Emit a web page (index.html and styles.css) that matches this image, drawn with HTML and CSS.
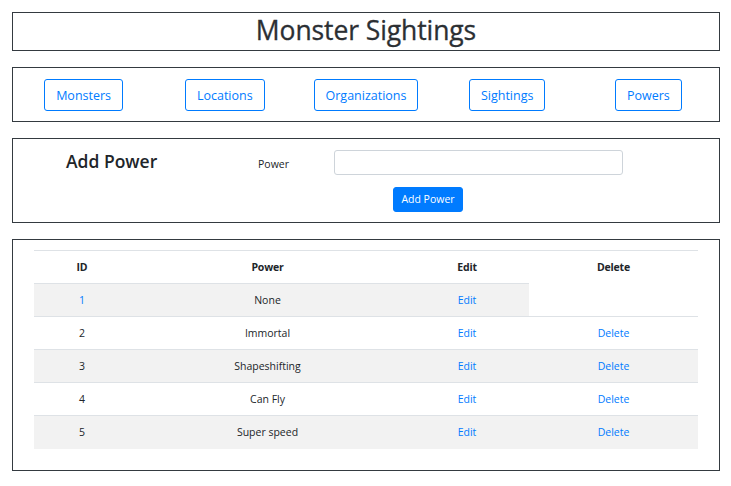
FILE: index.html
```html
<!DOCTYPE html>
<html lang="en">
<head>
<meta charset="utf-8">
<title>Monster Sightings</title>
<link rel="stylesheet" href="styles.css">
</head>
<body>
<div class="page">
  <header class="box title-box">
    <h1 class="title">Monster Sightings</h1>
  </header>

  <nav class="box nav-box">
    <div class="nav-col"><a class="btn-outline" href="#">Monsters</a></div>
    <div class="nav-col"><a class="btn-outline" href="#">Locations</a></div>
    <div class="nav-col"><a class="btn-outline" href="#">Organizations</a></div>
    <div class="nav-col"><a class="btn-outline" href="#">Sightings</a></div>
    <div class="nav-col"><a class="btn-outline" href="#">Powers</a></div>
  </nav>

  <section class="box form-box">
    <div class="form-row">
      <h3 class="form-title">Add Power</h3>
      <label class="form-label" for="power">Power</label>
      <input class="form-input" id="power" type="text">
    </div>
    <div class="form-actions">
      <button class="btn-primary" type="button">Add Power</button>
    </div>
  </section>

  <section class="box table-box">
    <table class="data-table">
      <colgroup>
        <col class="c-id"><col class="c-power"><col class="c-edit"><col class="c-delete">
      </colgroup>
      <thead>
        <tr><th>ID</th><th>Power</th><th>Edit</th><th>Delete</th></tr>
      </thead>
      <tbody>
        <tr class="striped"><td class="link">1</td><td>None</td><td><a href="#">Edit</a></td></tr>
        <tr><td>2</td><td>Immortal</td><td><a href="#">Edit</a></td><td><a href="#">Delete</a></td></tr>
        <tr class="striped"><td>3</td><td>Shapeshifting</td><td><a href="#">Edit</a></td><td><a href="#">Delete</a></td></tr>
        <tr><td>4</td><td>Can Fly</td><td><a href="#">Edit</a></td><td><a href="#">Delete</a></td></tr>
        <tr class="striped"><td>5</td><td>Super speed</td><td><a href="#">Edit</a></td><td><a href="#">Delete</a></td></tr>
      </tbody>
    </table>
  </section>
</div>
</body>
</html>
```

FILE: styles.css
```css
* { box-sizing: border-box; }
html, body { margin: 0; padding: 0; background: #fff; }
body {
  font-family: "Open Sans", "Noto Sans", sans-serif;
  color: #212529;
}
.page {
  width: 708px;
  margin: 12px 0 0 12px;
  display: flex;
  flex-direction: column;
  gap: 16px;
}
.box {
  border: 1px solid #343a40;
}
.title-box {
  height: 39px;
  display: flex;
  align-items: center;
  justify-content: center;
  padding-bottom: 2px;
}
.title {
  margin: 0;
  font-size: 26.5px;
  font-weight: 500;
  color: #2b2f33;
  line-height: 1;
  letter-spacing: -0.1px;
  -webkit-text-stroke: 0.3px #2b2f33;
}
.nav-box {
  height: 55px;
  display: grid;
  grid-template-columns: repeat(5, 1fr);
  align-items: center;
}
.nav-col { display: flex; justify-content: center; }
.btn-outline {
  display: inline-block;
  height: 32px;
  line-height: 30px;
  padding: 1px 11px 0;
  border: 1px solid #007bff;
  border-radius: 3px;
  color: #007bff;
  font-size: 12.5px;
  text-decoration: none;
}
.form-box {
  height: 85px;
  padding: 11px 0 0 0;
}
.form-row {
  display: flex;
  align-items: center;
  height: 25px;
}
.form-title {
  margin: 0 0 3px 53px;
  width: 192px;
  font-size: 17.5px;
  font-weight: 600;
  color: #212529;
}
.form-label {
  width: 76px;
  font-size: 10.5px;
  padding-top: 2px;
}
.form-input {
  width: 289px;
  height: 25px;
  border: 1px solid #ced4da;
  border-radius: 3px;
}
.form-actions {
  margin: 11px 0 0 380px;
}
.btn-primary {
  width: 70px;
  height: 25px;
  background: #007bff;
  border: 1px solid #007bff;
  border-radius: 3px;
  color: #fff;
  font-family: inherit;
  font-size: 10.5px;
  padding: 0;
}
.table-box {
  height: 232px;
  padding: 10px 21px 0 21px;
}
.data-table {
  width: 664px;
  border-collapse: collapse;
  table-layout: fixed;
  font-size: 10.5px;
}
.c-id { width: 96px; }
.c-power { width: 275px; }
.c-edit { width: 124px; }
.c-delete { width: 169px; }
.data-table th, .data-table td {
  height: 33px;
  padding: 0;
  text-align: center;
  vertical-align: middle;
  border-top: 1px solid #dee2e6;
}
.data-table th { font-weight: 700; font-size: 10.5px; letter-spacing: -0.2px; }
.data-table tr.striped td { background: #f2f2f2; }
.data-table a, .data-table .link { color: #007bff; text-decoration: none; }
```
